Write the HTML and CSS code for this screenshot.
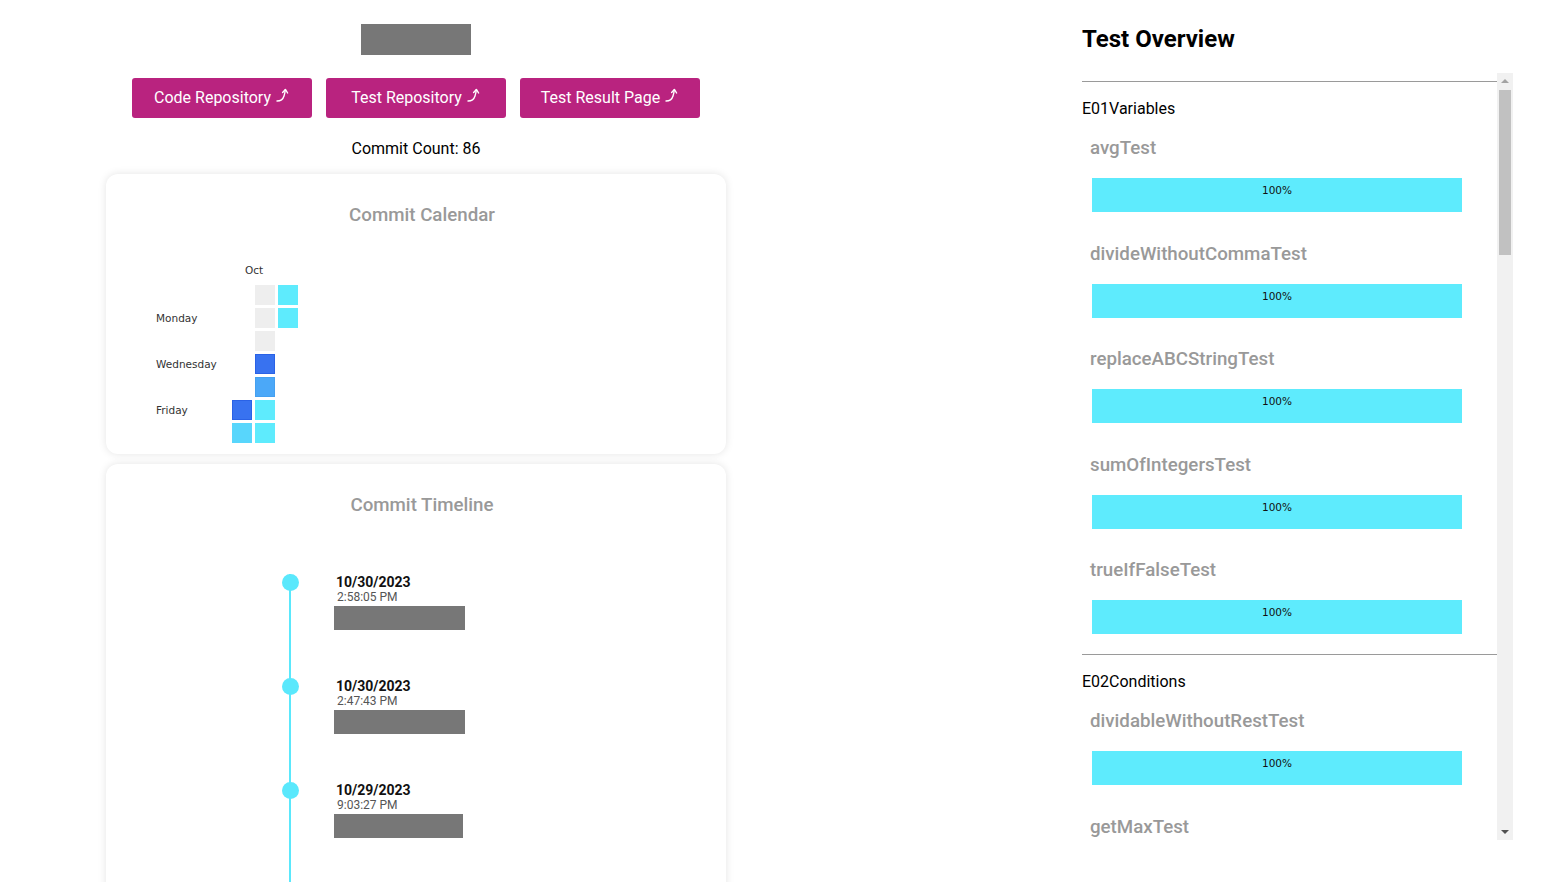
FILE: index.html
```html
<!DOCTYPE html>
<html lang="en">
<head>
<meta charset="utf-8">
<title>Project Overview</title>
<link rel="stylesheet" href="styles.css">
</head>
<body>
<div class="page">
  <div class="left">
    <div class="logo"></div>
    <div class="links">
      <a class="btn" href="#">Code Repository <svg class="ext" width="14" height="16" viewBox="0 0 14 16"><path d="M1 14 Q6.5 14 8 9 Q9 6 9.3 2.8" fill="none" stroke="#fff" stroke-width="1.4" stroke-linecap="round"/><path d="M6.6 5.4 L9.4 2.4 L11.6 6" fill="none" stroke="#fff" stroke-width="1.4" stroke-linecap="round" stroke-linejoin="round"/></svg></a>
      <a class="btn" href="#">Test Repository <svg class="ext" width="14" height="16" viewBox="0 0 14 16"><path d="M1 14 Q6.5 14 8 9 Q9 6 9.3 2.8" fill="none" stroke="#fff" stroke-width="1.4" stroke-linecap="round"/><path d="M6.6 5.4 L9.4 2.4 L11.6 6" fill="none" stroke="#fff" stroke-width="1.4" stroke-linecap="round" stroke-linejoin="round"/></svg></a>
      <a class="btn" href="#">Test Result Page <svg class="ext" width="14" height="16" viewBox="0 0 14 16"><path d="M1 14 Q6.5 14 8 9 Q9 6 9.3 2.8" fill="none" stroke="#fff" stroke-width="1.4" stroke-linecap="round"/><path d="M6.6 5.4 L9.4 2.4 L11.6 6" fill="none" stroke="#fff" stroke-width="1.4" stroke-linecap="round" stroke-linejoin="round"/></svg></a>
    </div>
    <div class="count">Commit Count: 86</div>

    <div class="card card-cal">
      <h3 class="card-title">Commit Calendar</h3>
      <svg class="cal" width="160" height="190" viewBox="0 0 160 190">
        <text class="cal-label" x="95" y="14">Oct</text>
        <text class="cal-label" x="6" y="62">Monday</text>
        <text class="cal-label" x="6" y="108">Wednesday</text>
        <text class="cal-label" x="6" y="154">Friday</text>
        <rect class="c-dark" x="82.5" y="140.5" width="19" height="19"/>
        <rect class="c-light" x="82" y="163" width="20" height="20"/>
        <rect class="c-empty" x="105" y="25" width="20" height="20"/>
        <rect class="c-empty" x="105" y="48" width="20" height="20"/>
        <rect class="c-empty" x="105" y="71" width="20" height="20"/>
        <rect class="c-dark" x="105.5" y="94.5" width="19" height="19"/>
        <rect class="c-mid" x="105.5" y="117.5" width="19" height="19"/>
        <rect class="c-cyan" x="105" y="140" width="20" height="20"/>
        <rect class="c-cyan" x="105" y="163" width="20" height="20"/>
        <rect class="c-cyan" x="128" y="25" width="20" height="20"/>
        <rect class="c-cyan" x="128" y="48" width="20" height="20"/>
      </svg>
    </div>

    <div class="card card-timeline">
      <h3 class="card-title">Commit Timeline</h3>
      <div class="timeline">
        <div class="entry">
          <span class="dot"></span>
          <div class="date">10/30/2023</div>
          <div class="time">2:58:05 PM</div>
          <div class="msg" style="width:131px"></div>
        </div>
        <div class="entry">
          <span class="dot"></span>
          <div class="date">10/30/2023</div>
          <div class="time">2:47:43 PM</div>
          <div class="msg" style="width:131px"></div>
        </div>
        <div class="entry">
          <span class="dot"></span>
          <div class="date">10/29/2023</div>
          <div class="time">9:03:27 PM</div>
          <div class="msg" style="width:129px"></div>
        </div>
        <div class="entry">
          <span class="dot"></span>
          <div class="date">10/29/2023</div>
          <div class="time">8:41:12 PM</div>
          <div class="msg" style="width:140px"></div>
        </div>
        <div class="entry">
          <span class="dot"></span>
          <div class="date">10/27/2023</div>
          <div class="time">4:15:50 PM</div>
          <div class="msg" style="width:120px"></div>
        </div>
      </div>
    </div>
  </div>

  <div class="right">
    <h2 class="overview-title">Test Overview</h2>
    <div class="scroll-wrap">
      <div class="scroll">
        <section class="group">
          <hr class="divider">
          <div class="group-title">E01Variables</div>
          <div class="test"><div class="test-name">avgTest</div><div class="bar">100%</div></div>
          <div class="test"><div class="test-name">divideWithoutCommaTest</div><div class="bar">100%</div></div>
          <div class="test"><div class="test-name">replaceABCStringTest</div><div class="bar">100%</div></div>
          <div class="test"><div class="test-name">sumOfIntegersTest</div><div class="bar">100%</div></div>
          <div class="test"><div class="test-name">trueIfFalseTest</div><div class="bar">100%</div></div>
        </section>
        <section class="group">
          <hr class="divider">
          <div class="group-title">E02Conditions</div>
          <div class="test"><div class="test-name">dividableWithoutRestTest</div><div class="bar">100%</div></div>
          <div class="test"><div class="test-name">getMaxTest</div><div class="bar">100%</div></div>
          <div class="test"><div class="test-name">isEvenTest</div><div class="bar">100%</div></div>
        </section>
      </div>
      <div class="scrollbar">
        <div class="sb-btn"><span class="tri-up"></span></div>
        <div class="sb-track"><div class="sb-thumb"></div></div>
        <div class="sb-btn"><span class="tri-down"></span></div>
      </div>
    </div>
  </div>
</div>
</body>
</html>
```

FILE: styles.css
```css
body {
  margin: 0;
  font-family: Roboto, "Liberation Sans", sans-serif;
  color: #000;
  background: #fff;
}

.page {
  display: flex;
  align-items: flex-start;
}

/* Left column */
.left {
  width: 832px;
  display: flex;
  flex-direction: column;
  align-items: center;
}

.logo {
  width: 110px;
  height: 31px;
  margin-top: 24px;
  background: #777;
}

.links {
  display: flex;
  gap: 14px;
  margin-top: 23px;
}

.btn {
  width: 180px;
  height: 40px;
  box-sizing: border-box;
  padding-bottom: 2px;
  display: flex;
  align-items: center;
  justify-content: center;
  gap: 5px;
  background: #b9237f;
  color: #fff;
  border-radius: 3px;
  font-size: 16px;
  text-decoration: none;
}

.ext {
  display: block;
  margin-top: -4px;
}

.count {
  margin-top: 21px;
  font-size: 16px;
  line-height: 19px;
}

.card {
  width: 620px;
  box-sizing: border-box;
  background: #fff;
  border-radius: 12px;
  box-shadow: 0 0 9px rgba(0, 0, 0, 0.11);
}

.card-title {
  margin: 0;
  padding-left: 12px;
  text-align: center;
  font-size: 18.72px;
  line-height: 21px;
  font-weight: 500;
  color: #999;
}

.card-cal {
  margin-top: 16px;
  height: 280px;
  padding-top: 31px;
}

.cal {
  display: block;
  margin: 34px 0 0 44px;
}

.cal-label {
  font-family: "DejaVu Sans", Verdana, sans-serif;
  font-size: 10.5px;
  fill: #333;
}

.c-empty { fill: #eeeeee; }
.c-cyan { fill: #5eebfd; }
.c-light { fill: #58d6fc; }
.c-mid { fill: #4ba8f8; stroke: #45a0f0; stroke-width: 1; }
.c-dark { fill: #3872f0; stroke: #2a62e6; stroke-width: 1; }

.card-timeline {
  margin-top: 10px;
  padding-top: 31px;
  padding-bottom: 20px;
}

.timeline {
  margin: 58px 0 0 183px;
  border-left: 2px solid #5ae8fc;
}

.entry {
  position: relative;
  padding: 0 0 48px 43px;
}

.dot {
  position: absolute;
  left: -9.5px;
  top: -0.5px;
  width: 17px;
  height: 17px;
  border-radius: 50%;
  background: #5ae8fc;
}

.date {
  font-size: 14px;
  line-height: 16px;
  font-weight: 700;
  color: #111;
  padding-left: 2px;
}

.time {
  font-size: 12px;
  line-height: 14px;
  color: #555;
  padding-left: 3px;
}

.msg {
  height: 24px;
  margin-top: 2px;
  background: #777;
}

/* Right column */
.right {
  width: 431px;
  margin-left: 250px;
}

.overview-title {
  margin: 25px 0 0;
  font-size: 24px;
  line-height: 28px;
  font-weight: 700;
}

.scroll-wrap {
  display: flex;
  height: 767px;
  margin-top: 20px;
}

.scroll {
  flex: 1;
  min-width: 0;
  padding-top: 8px;
  overflow: hidden;
}

.scrollbar {
  width: 16px;
  display: flex;
  flex-direction: column;
  background: #f1f1f1;
}

.sb-btn {
  height: 16px;
  display: flex;
  align-items: center;
  justify-content: center;
}

.tri-up {
  width: 0;
  height: 0;
  border-left: 4px solid transparent;
  border-right: 4px solid transparent;
  border-bottom: 4px solid #a3a3a3;
}

.tri-down {
  width: 0;
  height: 0;
  border-left: 4px solid transparent;
  border-right: 4px solid transparent;
  border-top: 4px solid #505050;
}

.sb-track {
  flex: 1;
  padding: 1px 2px;
}

.sb-thumb {
  height: 165px;
  background: #c1c1c1;
}

.divider {
  margin: 0;
  border: 0;
  border-top: 1px solid #9a9a9a;
}

.group-title {
  margin-top: 16.5px;
  margin-bottom: 19.5px;
  font-size: 16px;
  line-height: 19px;
}

.test {
  padding-bottom: 30.5px;
}

.test:last-child {
  padding-bottom: 20px;
}

.test-name {
  padding-left: 8px;
  font-size: 18.72px;
  line-height: 22px;
  font-weight: 500;
  color: #999;
}

.bar {
  width: 370px;
  height: 34px;
  box-sizing: border-box;
  margin: 19px 0 0 10px;
  padding-top: 6px;
  background: #5eebfd;
  text-align: center;
  font-family: "DejaVu Sans", Verdana, sans-serif;
  font-size: 10.5px;
  line-height: 12px;
  color: #111;
}
```
